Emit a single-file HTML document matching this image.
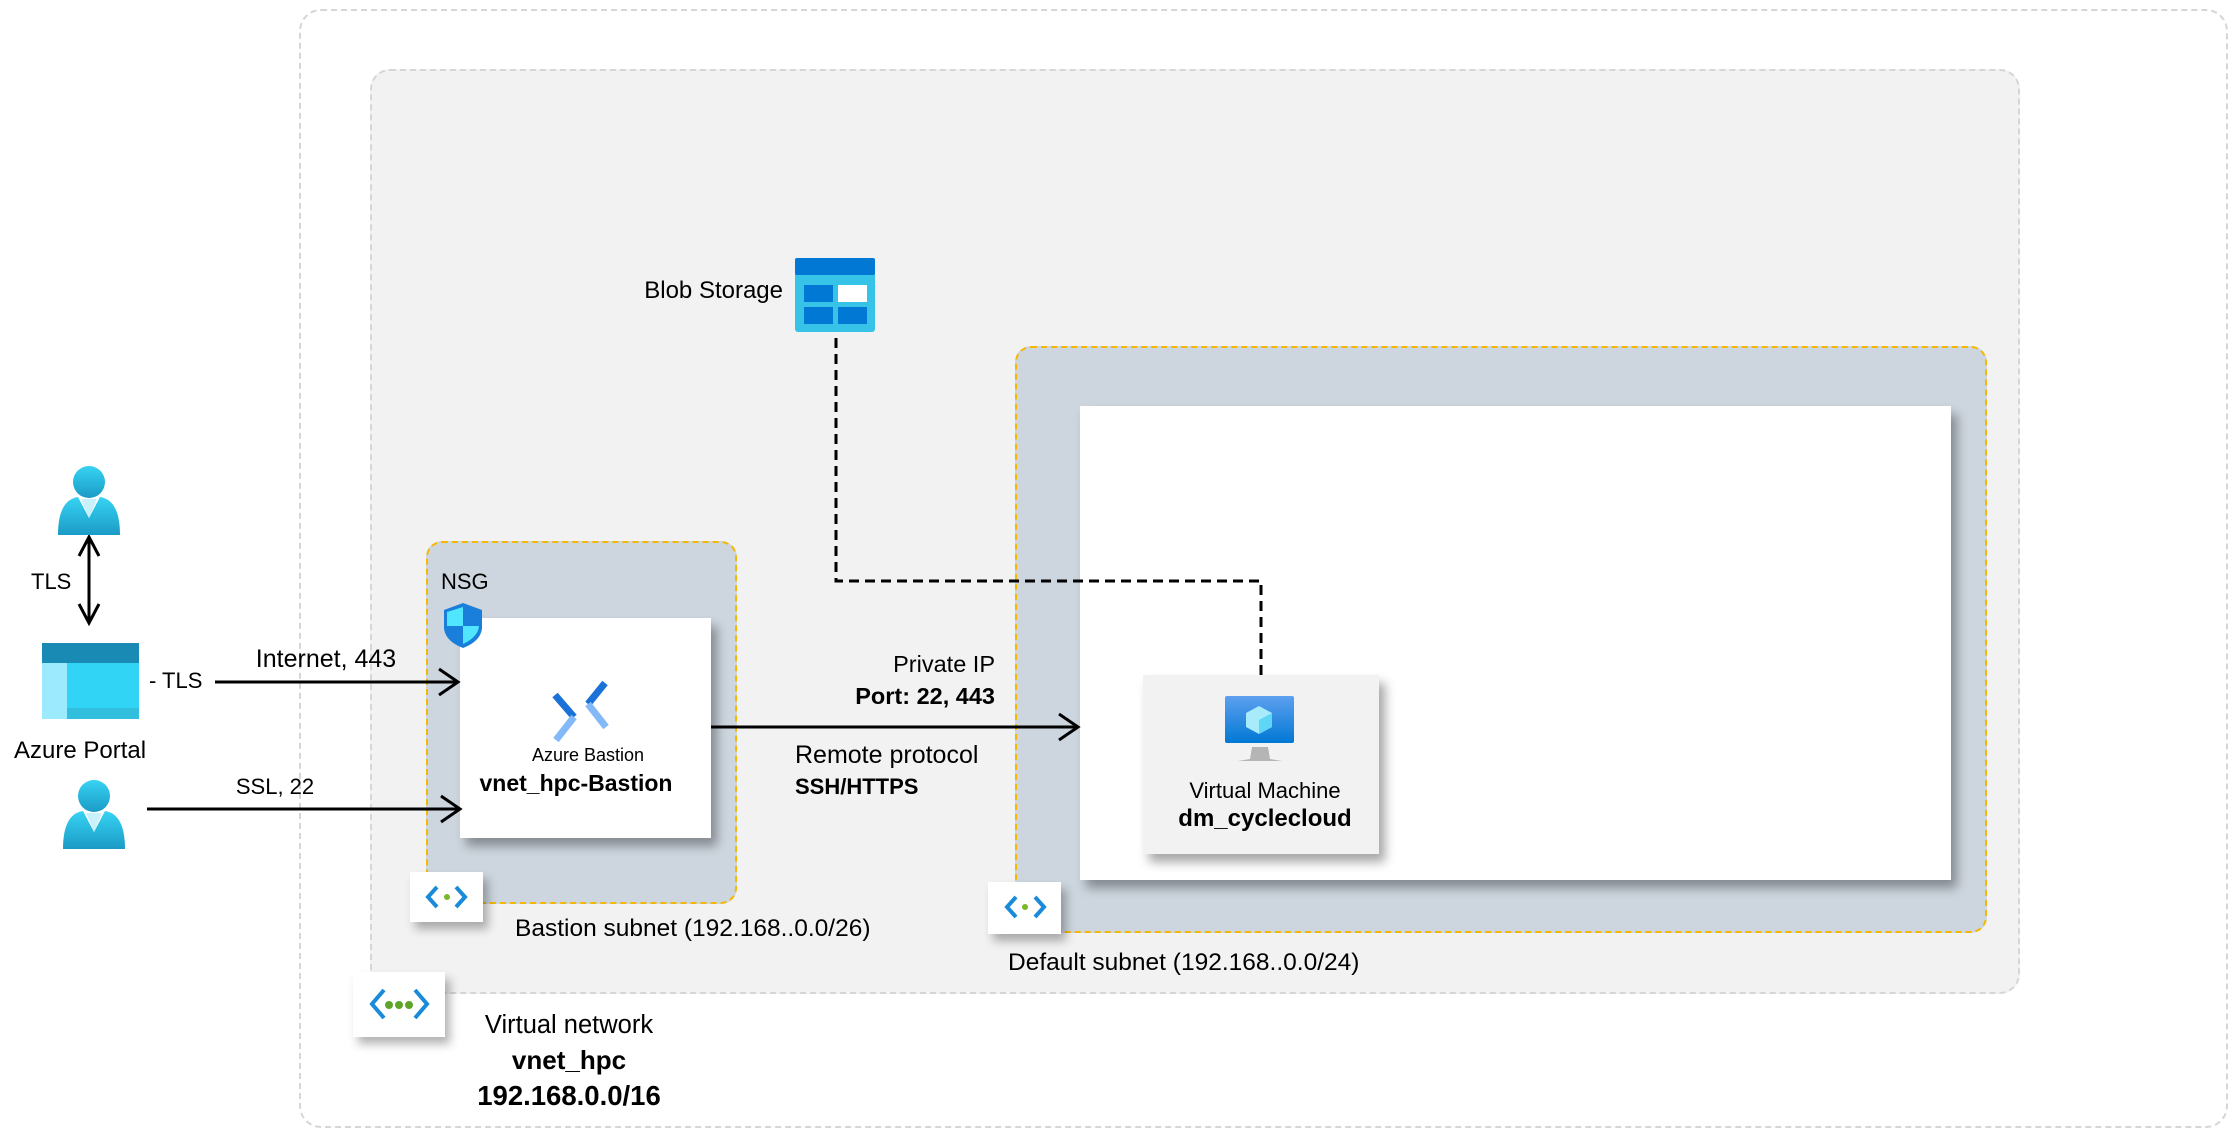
<!DOCTYPE html>
<html><head><meta charset="utf-8"><style>
*{margin:0;padding:0;box-sizing:border-box}
body{width:2237px;height:1137px;background:#fff;position:relative;overflow:hidden;font-family:"Liberation Sans",sans-serif;color:#000}
.a{position:absolute}
.t{position:absolute;font-size:22px;line-height:1;white-space:nowrap}
.b{font-weight:bold}
.c{transform:translateX(-50%)}
.r{transform:translateX(-100%)}
</style></head><body>
<div class="a" style="left:299px;top:9px;width:1929px;height:1119px;border:2px dashed #d6d6d6;border-radius:22px"></div>
<div class="a" style="left:370px;top:69px;width:1650px;height:925px;background:#f2f2f2;border:2px dashed #d6d6d6;border-radius:20px"></div>
<div class="a" style="left:1015px;top:346px;width:972px;height:587px;background:#cdd5de;border:2px dashed #f5b800;border-radius:16px"></div>
<div class="a" style="left:1080px;top:406px;width:871px;height:474px;background:#fff;box-shadow:6px 8px 10px rgba(0,0,0,.35)"></div>
<div class="a" style="left:1143px;top:675px;width:236px;height:179px;background:#f2f2f2;box-shadow:6px 8px 10px rgba(0,0,0,.35)"></div>
<div class="a" style="left:426px;top:541px;width:311px;height:363px;background:#cdd5de;border:2px dashed #f5b800;border-radius:16px"></div>
<div class="a" style="left:460px;top:618px;width:251px;height:220px;background:#fff;box-shadow:6px 8px 10px rgba(0,0,0,.35)"></div>
<div class="a" style="left:410px;top:872px;width:73px;height:50px;background:#fff;box-shadow:5px 7px 9px rgba(0,0,0,.3)"></div>
<div class="a" style="left:988px;top:882px;width:73px;height:52px;background:#fff;box-shadow:5px 7px 9px rgba(0,0,0,.3)"></div>
<div class="a" style="left:353px;top:972px;width:92px;height:65px;background:#fff;box-shadow:5px 7px 9px rgba(0,0,0,.3)"></div>

<svg class="a" style="left:0;top:0" width="2237" height="1137">
<defs>
<linearGradient id="u" x1="0" y1="0" x2="0" y2="1"><stop offset="0" stop-color="#37d3f3"/><stop offset="1" stop-color="#1b9bc6"/></linearGradient>
<linearGradient id="vm" x1="0" y1="0" x2="0" y2="1"><stop offset="0" stop-color="#5ea0ef"/><stop offset="1" stop-color="#0078d4"/></linearGradient>
</defs>
<g stroke="#000" stroke-width="3" fill="none">
<line x1="89" y1="538" x2="89" y2="622"/><polyline points="79,556 89,537 99,556"/><polyline points="79,604 89,623 99,604"/>
<line x1="215" y1="682" x2="458" y2="682"/><polyline points="439,669 458,682 439,695"/>
<line x1="147" y1="809" x2="460" y2="809"/><polyline points="441,796 460,809 441,822"/>
<line x1="711" y1="727" x2="1078" y2="727"/><polyline points="1059,714 1078,727 1059,740"/>
<polyline points="836,338 836,581 1261,581 1261,675" stroke-dasharray="10,6"/>
</g>
<circle cx="89" cy="482" r="16" fill="url(#u)"/>
<path d="M58 535 Q58 500 78 497 L89 518 L100 497 Q120 500 120 535 Z" fill="url(#u)"/>
<path d="M81 499 L89 518 L97 499 Z" fill="#c8f1fb"/>
<circle cx="94" cy="796" r="16" fill="url(#u)"/>
<path d="M63 849 Q63 814 83 811 L94 832 L105 811 Q125 814 125 849 Z" fill="url(#u)"/>
<path d="M86 813 L94 832 L102 813 Z" fill="#c8f1fb"/>
<rect x="42" y="643" width="97" height="76" rx="3" fill="#32d4f5"/>
<rect x="42" y="643" width="97" height="20" fill="#198ab3"/>
<rect x="42" y="663" width="25" height="56" fill="#9ceafd"/>
<rect x="67" y="708" width="72" height="11" fill="#32bedd"/>
<rect x="795" y="258" width="80" height="74" rx="3" fill="#37c2e8"/>
<rect x="795" y="258" width="80" height="17" rx="2" fill="#0078d4"/>
<rect x="804" y="285" width="29" height="17" fill="#0078d4"/><rect x="838" y="285" width="29" height="17" fill="#fff"/>
<rect x="804" y="307" width="29" height="17" fill="#0078d4"/><rect x="838" y="307" width="29" height="17" fill="#0078d4"/>
<path d="M463 603 L482 610 L482 628 Q481 641 463 648 Q445 641 444 628 L444 610 Z" fill="#1a7fdb"/>
<path d="M463 607 L463 626 L447 626 L447 612 Z M463 626 L479 626 Q478 637 463 644 Z" fill="#50e6ff"/>
<g stroke-width="7" fill="none" stroke-linecap="butt">
<line x1="555" y1="695" x2="574" y2="717" stroke="#1a72d8"/>
<line x1="574" y1="717" x2="556" y2="740" stroke="#83b9f9"/>
<line x1="605" y1="683" x2="588" y2="704" stroke="#1a72d8"/>
<line x1="588" y1="704" x2="606" y2="727" stroke="#83b9f9"/>
</g>
<rect x="1225" y="696" width="69" height="47" rx="2" fill="url(#vm)"/>
<path d="M1252 747 L1268 747 L1270 759 L1282 761 L1238 761 L1250 759 Z" fill="#b5b5b5"/>
<path d="M1259 706 L1272 713 L1272 727 L1259 734 L1246 727 L1246 713 Z" fill="#a8ecfb"/>
<path d="M1259 720 L1272 713 L1272 727 L1259 734 Z" fill="#5ed6f5"/>
<g fill="none" stroke-width="4">
<path d="M437 887 L428 897 L437 907" stroke="#1a8bd8"/><path d="M456 887 L465 897 L456 907" stroke="#1a8bd8"/>
<path d="M1016 897 L1007 907 L1016 917" stroke="#1a8bd8"/><path d="M1035 897 L1044 907 L1035 917" stroke="#1a8bd8"/>
<path d="M384 990 L372 1004 L384 1018" stroke="#1a8bd8"/><path d="M415 990 L427 1004 L415 1018" stroke="#1a8bd8"/>
</g>
<circle cx="447" cy="897" r="3" fill="#7ab829"/><circle cx="1025" cy="907" r="3" fill="#7ab829"/>
<circle cx="389" cy="1005" r="4" fill="#5da42a"/><circle cx="399" cy="1005" r="4" fill="#5da42a"/><circle cx="409" cy="1005" r="4" fill="#5da42a"/>
</svg>

<div class="t" style="left:31px;top:571px">TLS</div>
<div class="t" style="left:149px;top:670px">- TLS</div>
<div class="t c" style="left:326px;top:647px;font-size:25px">Internet, 443</div>
<div class="t" style="left:14px;top:739px;font-size:24px">Azure Portal</div>
<div class="t c" style="left:275px;top:776px">SSL, 22</div>
<div class="t" style="left:441px;top:571px">NSG</div>
<div class="t c" style="left:588px;top:746px;font-size:18px">Azure Bastion</div>
<div class="t c b" style="left:576px;top:772px;font-size:23px">vnet_hpc-Bastion</div>
<div class="t r" style="left:995px;top:653px;font-size:23.5px">Private IP</div>
<div class="t r b" style="left:995px;top:685px;font-size:23.5px">Port: 22, 443</div>
<div class="t" style="left:795px;top:743px;font-size:25px">Remote protocol</div>
<div class="t b" style="left:795px;top:776px">SSH/HTTPS</div>
<div class="t r" style="left:783px;top:279px;font-size:24px">Blob Storage</div>
<div class="t c" style="left:1265px;top:780px;font-size:22px">Virtual Machine</div>
<div class="t c b" style="left:1265px;top:807px;font-size:24px">dm_cyclecloud</div>
<div class="t" style="left:515px;top:917px;font-size:24.5px">Bastion subnet (192.168..0.0/26)</div>
<div class="t" style="left:1008px;top:951px;font-size:24.5px">Default subnet (192.168..0.0/24)</div>
<div class="t c" style="left:569px;top:1013px;font-size:25.5px">Virtual network</div>
<div class="t c b" style="left:569px;top:1047px;font-size:26px">vnet_hpc</div>
<div class="t c b" style="left:569px;top:1082px;font-size:27.5px">192.168.0.0/16</div>
</body></html>
